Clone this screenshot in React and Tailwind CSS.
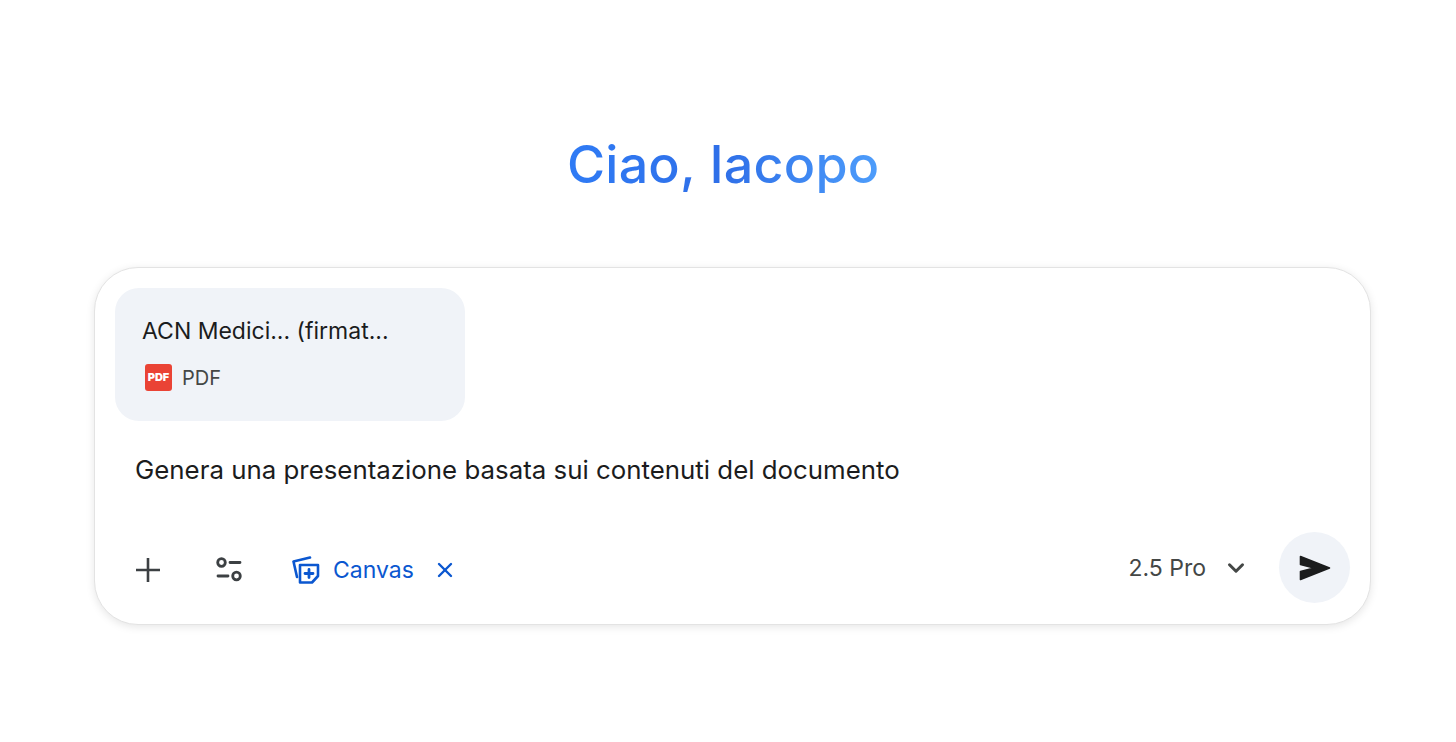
import { X, ChevronDown } from "lucide-react";

const sans = "font-['Inter','Liberation_Sans',sans-serif]";

function PlusIcon() {
  return (
    <svg width="26" height="26" viewBox="0 0 26 26" fill="none" stroke="#3c4043" strokeWidth="2.6">
      <path d="M13 1v24M1 13h24" />
    </svg>
  );
}

function TuneIcon() {
  return (
    <svg width="28" height="26" viewBox="0 0 28 26" fill="none" stroke="#3c4043" strokeWidth="2.8" strokeLinecap="round">
      <circle cx="6.5" cy="5.5" r="3.8" />
      <path d="M15 5.5h10M3 19h10" />
      <circle cx="21.5" cy="19" r="3.8" />
    </svg>
  );
}

function CanvasIcon() {
  return (
    <svg width="28" height="28" viewBox="0 0 28 28" fill="none" stroke="#0b57d0" strokeWidth="2.6" strokeLinejoin="round" strokeLinecap="round">
      <path d="M5 21 1.5 5.5 18 1.5" />
      <path d="M8 9h18v11l-6 6.5H8z" />
      <path d="M17 13.5v8M13 17.5h8" strokeWidth="2.8" />
    </svg>
  );
}

function SendIcon() {
  return (
    <svg width="32" height="26" viewBox="0 0 32 26" fill="#1b1c1d">
      <path d="M1.5 1.5 30.5 13 1.5 24.5V16.5L15 13 1.5 9.5z" stroke="#1b1c1d" strokeWidth="1.6" strokeLinejoin="round" />
    </svg>
  );
}

export default function App() {
  return (
    <div className={`min-h-screen bg-white ${sans} flex flex-col items-start`}>
      <h1 className="ml-[567px] mt-[130px] h-[70px] flex items-center text-[52px] leading-none font-[450] tracking-[0.2px] bg-gradient-to-r from-[#2f7bf5] via-[#2f6fe8] to-[#4e9dfb] bg-clip-text text-transparent">
        Ciao, Iacopo
      </h1>

      {/* Prompt card */}
      <div className="ml-[94px] mt-[67px] w-[1277px] h-[358px] flex flex-col rounded-[44px] border border-[#e3e3e3] bg-white px-5 pt-5 pb-[21px] shadow-[0_2px_8px_rgba(0,0,0,0.1)]">
        <div className="w-[350px] h-[133px] rounded-3xl bg-[#f0f3f8] pl-[27px] pt-[29px]">
          <div className="text-[23px] leading-7 font-normal text-[#1b1c1d]">ACN Medici... (firmat...</div>
          <div className="mt-[19px] flex items-center gap-[10px] pl-[3px]">
            <div className="w-[27px] h-[27px] rounded-[3px] bg-[#ea4335] flex items-center justify-center text-[11px] font-black leading-none text-white">
              PDF
            </div>
            <span className="text-[20px] leading-6 text-[#444746]">PDF</span>
          </div>
        </div>

        <p className="mt-[33px] ml-5 text-[25.85px] leading-8 text-[#1b1c1d]">
          Genera una presentazione basata sui contenuti del documento
        </p>

        {/* Toolbar */}
        <div className="mt-auto flex items-center">
          <div className="ml-5 mt-1 flex items-center gap-[54px]">
            <PlusIcon />
            <TuneIcon />
          </div>
          <div className="ml-[49px] mt-1 flex items-center gap-[13px] text-[#0b57d0]">
            <CanvasIcon />
            <span className="text-[23px] leading-7">Canvas</span>
            <X size={24} strokeWidth={2.4} className="ml-[6px]" />
          </div>

          <div className="ml-auto flex items-center">
            <span className="text-[23px] leading-7 text-[#444746]">2.5 Pro</span>
            <ChevronDown size={26} strokeWidth={2.8} className="ml-[17px] text-[#444746]" />
            <button className="ml-[30px] w-[71px] h-[71px] rounded-full bg-[#f0f3f8] flex items-center justify-center">
              <SendIcon />
            </button>
          </div>
        </div>
      </div>
    </div>
  );
}
